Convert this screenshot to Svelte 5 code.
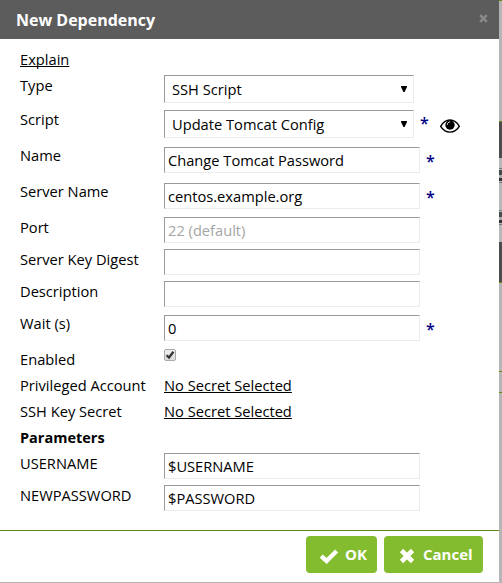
<script>
  const rows = [
    { label: 'Type', kind: 'select', value: 'SSH Script', height: 34, top: 2 },
    { label: 'Script', kind: 'select', value: 'Update Tomcat Config', height: 36, top: 3, required: true, eye: true },
    { label: 'Name', kind: 'input', value: 'Change Tomcat Password', height: 36, top: 4, required: true },
    { label: 'Server Name', kind: 'input', value: 'centos.example.org', height: 36, top: 4, required: true },
    { label: 'Port', kind: 'input', value: '22 (default)', height: 32, top: 2, hint: true },
    { label: 'Server Key Digest', kind: 'input', value: '', height: 32, top: 2 },
    { label: 'Description', kind: 'input', value: '', height: 32, top: 2 },
    { label: 'Wait (s)', kind: 'input', value: '0', height: 36, top: 4, required: true },
    { label: 'Enabled', kind: 'check', height: 26, top: 2 },
    { label: 'Privileged Account', kind: 'link', value: 'No Secret Selected', height: 26, top: 1 },
    { label: 'SSH Key Secret', kind: 'link', value: 'No Secret Selected', height: 26, top: 1 },
    { label: 'Parameters', kind: 'heading', height: 26, top: 0 },
    { label: 'USERNAME', kind: 'input', value: '$USERNAME', height: 32, top: 2 },
    { label: 'NEWPASSWORD', kind: 'input', value: '$PASSWORD', height: 47, top: 2 }
  ];
</script>

<div class="page">
  <section class="dialog">
    <header>
      <h1>New Dependency</h1>
      <svg class="close" width="9" height="9" viewBox="0 0 9 9"><path d="M1.2 1.2 7.8 7.8M7.8 1.2 1.2 7.8" stroke="#8a8a8a" stroke-width="2.5" /></svg>
    </header>
    <div class="form">
      <div class="explain"><span class="link">Explain</span></div>
      {#each rows as row}
        <div class="row" style="height: {row.height}px">
          <div class="label" class:bold={row.kind === 'heading'}>{row.label}</div>
          <div class="field" style="padding-top: {row.top}px">
            {#if row.kind === 'select'}
              <div class="box select">
                <span>{row.value}</span>
                <svg width="6" height="6" viewBox="0 0 6 6"><path d="M0 0h6v1L3.6 6H2.4L0 1z" /></svg>
              </div>
            {:else if row.kind === 'input'}
              <div class="box" class:hint={row.hint}>{row.value}</div>
            {:else if row.kind === 'check'}
              <div class="check">
                <svg width="10" height="10" viewBox="0 0 10 10"><path d="M1.6 5.2 4 7.6 8.4 1.8" fill="none" stroke="#333" stroke-width="2.3" /></svg>
              </div>
            {:else if row.kind === 'link'}
              <span class="link">{row.value}</span>
            {/if}
            {#if row.required}<span class="star" class:high={row.eye}>*</span>{/if}
            {#if row.eye}
              <svg class="eye" width="20" height="14" viewBox="0 0 20 14">
                <path d="M.7 7.3C3 3.2 6.3 1 10 1s7 2.2 9.3 6.3C17 11.200 13.700 13.100 10 13.100S3 11.200.7 7.300Z" fill="#fff" stroke="#000" stroke-width="1.400" />
                <circle cx="10" cy="6" r="4.700" />
                <path d="M7.300 5.800c0-1.700 1.200-2.900 2.800-2.900" fill="none" stroke="#fff" stroke-width=".9" />
              </svg>
            {/if}
          </div>
        </div>
      {/each}
    </div>
    <footer>
      <div class="button ok">
        <svg width="20" height="16" viewBox="0 0 20 16"><path d="M2.200 8.200 7.600 13 17.600 3" fill="none" stroke="#fff" stroke-width="4.400" /></svg>
        <span>OK</span>
      </div>
      <div class="button cancel">
        <svg width="16" height="16" viewBox="0 0 16 16"><path d="M2.500 2.500 13.500 13.500M13.500 2.500 2.500 13.500" stroke="#fff" stroke-width="4.600" /></svg>
        <span>Cancel</span>
      </div>
    </footer>
  </section>
  <aside class="behind">
    <i class="line"></i>
    <i style="height: 120px"></i>
    <i class="line"></i>
    <i class="dark" style="height: 36px"></i>
    <i class="light" style="height: 10px"></i>
    <i class="thumb"></i>
    <i class="light" style="height: 26px"></i>
    <i class="thumb"></i>
    <i class="light" style="height: 16px"></i>
    <i class="dark" style="height: 40px"></i>
    <i class="line"></i>
    <i style="height: 88px"></i>
    <i class="line"></i>
    <i style="height: 20px"></i>
    <i class="line"></i>
  </aside>
</div>

<style>
  :global(body) { margin: 0; background: #b5b5b5; }
  .page {
    display: flex;
    width: 502px;
    height: 583px;
    overflow: hidden;
    background: #b5b5b5;
    color: #000;
    font: 14.67px/22px "Open Sans", sans-serif;
  }
  .dialog { width: 499px; height: 582px; background: #fff; }
  header {
    box-sizing: border-box;
    display: flex;
    align-items: center;
    justify-content: space-between;
    height: 39px;
    padding: 0 11px 1px 16px;
    background: #5c5c5c;
  }
  h1 { margin: 1px 0 0; color: #fff; font-size: 16px; font-weight: 700; line-height: 22px; }
  .close { margin-bottom: 1px; }
  .form { padding: 8px 0 0 20px; }
  .explain { box-sizing: border-box; height: 26px; padding-top: 1px; }
  .row { display: flex; }
  .label { box-sizing: border-box; width: 144px; padding-top: 1px; white-space: nowrap; }
  .bold { padding-top: 2px; font-weight: 700; font-size: 14.5px; }
  .field { display: flex; align-items: flex-start; }
  .box {
    box-sizing: border-box;
    width: 256px;
    height: 26px;
    padding-left: 3px;
    border: 1px solid;
    border-color: #999 #ebebeb #ebebeb #999;
    line-height: 25px;
    white-space: nowrap;
  }
  .select {
    display: flex;
    align-items: center;
    justify-content: space-between;
    width: 250px;
    height: 28px;
    padding: 0 6px 0 7px;
  }
  .select svg { margin-bottom: 1px; }
  .hint { color: #a5a5a5; }
  .link {
    text-decoration: underline;
    text-decoration-thickness: 1px;
    text-underline-offset: 1px;
    text-decoration-skip-ink: none;
  }
  .check {
    box-sizing: border-box;
    display: flex;
    width: 12px;
    height: 12px;
    border: 1px solid #aaa;
    border-radius: 2px;
    background: linear-gradient(#eee, #dcdcdc);
  }
  .star { width: 9px; margin: 3px 0 0 6px; color: #000080; font-size: 16px; font-weight: 600; line-height: 22px; }
  .high { margin-top: 2px; }
  .eye { margin: 9px 0 0 11px; }
  footer {
    display: flex;
    justify-content: flex-end;
    gap: 7px;
    height: 51px;
    padding: 5px 16px 0 0;
    border-top: 1px solid #5e8c12;
    box-sizing: border-box;
  }
  .button {
    box-sizing: border-box;
    display: flex;
    align-items: center;
    height: 37px;
    padding-bottom: 1px;
    border-radius: 4px;
    background: #83bd2f;
    color: #fff;
    font-size: 15px;
    font-weight: 700;
  }
  .ok { width: 71px; padding-left: 13px; gap: 6px; }
  .cancel { width: 99px; padding-left: 15px; gap: 8px; }
  .button svg { margin-top: 4px; }
  .behind { display: flex; flex-direction: column; width: 3px; }
  .behind i { display: block; flex: none; background: #b5b5b5; }
  .behind .line { height: 1px; background: #5e8c12; }
  .behind .dark { background: #4c4c4c; }
  .behind .light { background: #b8baba; }
  .behind .thumb {
    height: 16px;
    background: linear-gradient(#777 0 1px, #b8baba 1px 2px, #444b4b 2px 7px, #aaa 7px 10px, #303636 10px 13px, #b8baba 13px 14px, #777 14px 15px, #b8baba 15px);
  }
</style>
